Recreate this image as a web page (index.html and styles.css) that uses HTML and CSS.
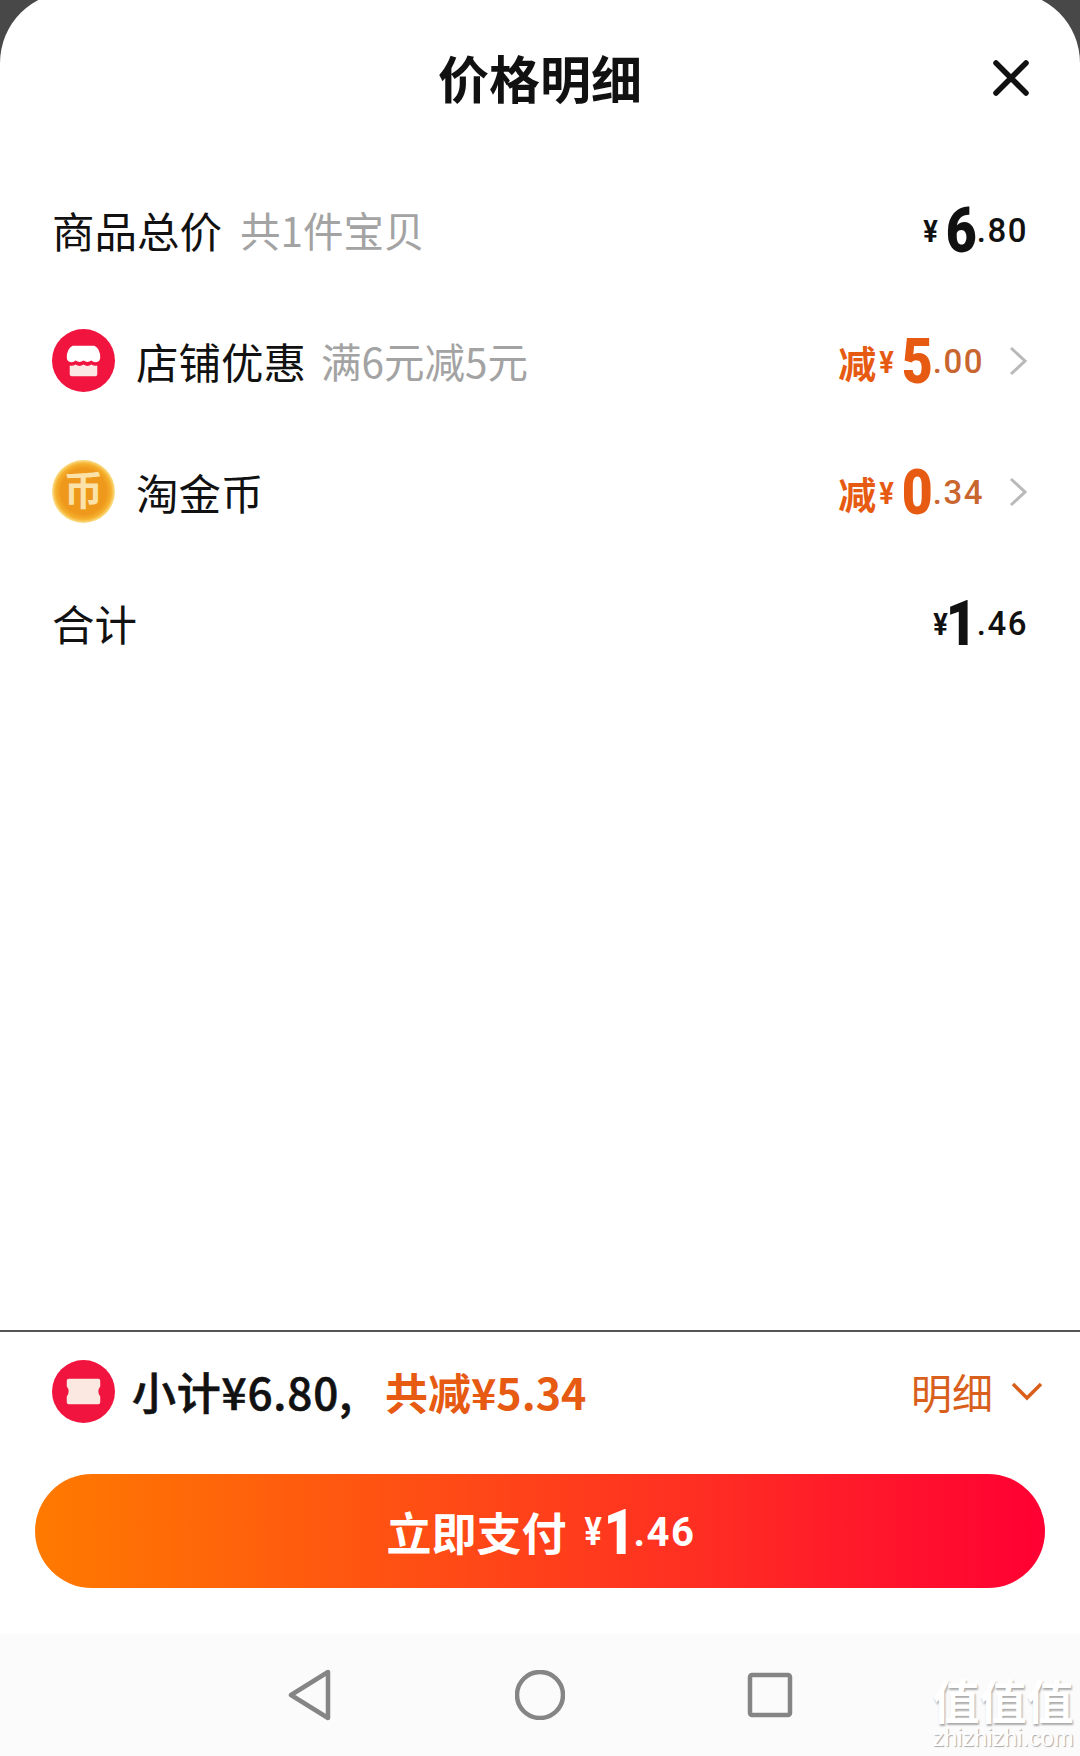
FILE: index.html
```html
<!DOCTYPE html>
<html lang="zh-CN">
  <head>
    <meta charset="UTF-8" />
    <title>价格明细</title>
    <link rel="stylesheet" href="styles.css">
  </head>
  <body>
    <div class="sheet">
      <header class="sheet-head">
        <h1>价格明细</h1>
        <svg class="close" viewBox="0 0 36 36" width="36" height="36">
          <path d="M3 3L33 33M33 3L3 33" fill="none" stroke="#111" stroke-width="5.5" stroke-linecap="round" />
        </svg>
      </header>

      <!-- price rows -->
      <section class="rows">
        <div class="row">
          <span class="label label-wide">商品总价</span>
          <span class="hint">共1件宝贝</span>
          <span class="price"><i>¥</i><b>6</b><em>.80</em></span>
        </div>
        <div class="row">
          <svg class="icon" viewBox="0 0 64 64" width="63" height="63">
            <circle cx="32" cy="32" r="32" fill="#f0143f" />
            <path d="M21 17H43Q49 20 49 29Q49 32 47 33Q43 35 40 32Q36 35 32 32Q28 35 24 32Q21 35 17 33Q15 32 15 29Q15 20 21 17Z" fill="#fff" />
            <path d="M18 37Q21 38 24 36Q28 39 32 36Q36 39 40 36Q43 38 46 37V46Q46 48 44 48H20Q18 48 18 46Z" fill="#fbe8e4" />
          </svg>
          <span class="label">店铺优惠</span>
          <span class="hint">满6元减5元</span>
          <span class="price price-off"><span class="off">减</span><i>¥</i><b>5</b><em>.00</em></span>
          <svg class="arrow" viewBox="0 0 20 32" width="20" height="32">
            <path d="M3 3L17 16L3 29" fill="none" stroke="#b9b9b9" stroke-width="3" />
          </svg>
        </div>
        <div class="row">
          <svg class="icon" viewBox="0 0 64 64" width="63" height="63">
            <defs>
              <radialGradient id="coin" cx="50%" cy="50%" r="50%">
                <stop offset="0.72" stop-color="#ee981c" />
                <stop offset="0.88" stop-color="#f5b02c" />
                <stop offset="1" stop-color="#fbe08c" />
              </radialGradient>
            </defs>
            <circle cx="32" cy="32" r="32" fill="url(#coin)" />
            <text class="coin-text" x="32" y="46" text-anchor="middle">币</text>
          </svg>
          <span class="label">淘金币</span>
          <span class="price price-off"><span class="off">减</span><i>¥</i><b>0</b><em>.34</em></span>
          <svg class="arrow" viewBox="0 0 20 32" width="20" height="32">
            <path d="M3 3L17 16L3 29" fill="none" stroke="#b9b9b9" stroke-width="3" />
          </svg>
        </div>
        <div class="row">
          <span class="label">合计</span>
          <span class="price"><i>¥</i><b class="one">1</b><em>.46</em></span>
        </div>
      </section>

      <footer class="summary">
        <div class="sum-row">
          <svg class="icon" viewBox="0 0 64 64" width="63" height="63">
            <circle cx="32" cy="32" r="32" fill="#f0143f" />
            <path d="M17 19H47Q49 19 49 21V27Q45 32 49 37V43Q49 45 47 45H17Q15 45 15 43V37Q19 32 15 27V21Q15 19 17 19Z" fill="#fbe8e0" />
          </svg>
          <span class="sum-text">小计¥6.80,</span>
          <span class="sum-off">共减¥5.34</span>
          <span class="detail">明细</span>
          <svg class="chevron" viewBox="0 0 32 20" width="32" height="20">
            <path d="M2 3L16 17L30 3" fill="none" stroke="#d9601c" stroke-width="3.5" />
          </svg>
        </div>
        <button class="pay">
          <span class="pay-text">立即支付</span>
          <span class="price pay-price"><i>¥</i><b>1</b><em>.46</em></span>
        </button>
      </footer>

      <nav class="navbar">
        <svg viewBox="0 0 46 52" width="46" height="52">
          <path d="M41 3V49L4 26Z" fill="none" stroke="#858585" stroke-width="4.5" stroke-linejoin="round" />
        </svg>
        <svg viewBox="0 0 50 50" width="50" height="50">
          <circle cx="25" cy="25" r="23" fill="none" stroke="#858585" stroke-width="4.5" />
        </svg>
        <svg viewBox="0 0 46 46" width="46" height="46">
          <rect x="3" y="3" width="40" height="40" rx="2" fill="none" stroke="#858585" stroke-width="4.5" />
        </svg>
      </nav>
    </div>

    <div class="watermark">
      <div class="wm-logo">值值值</div>
      <div class="wm-url">zhizhizhi.com</div>
    </div>
  </body>
</html>
```

FILE: styles.css
```css
body {
  margin: 0;
  width: 1080px;
  height: 1756px;
  overflow: hidden;
  position: relative;
  background-color: #484848;
  font-family: "Noto Sans CJK SC", "Noto Sans", sans-serif;
  color: #111;
}
/* top of the rounded sheet runs just past the screen edge */
.sheet {
  height: 1764px;
  margin-top: -8px;
  display: flex;
  flex-direction: column;
  background-color: #fff;
  border-radius: 71px 71px 0 0;
}
.sheet-head {
  height: 164px;
  padding-top: 6px;
  box-sizing: border-box;
  flex-shrink: 0;
  position: relative;
  display: flex;
  align-items: center;
  justify-content: center;
}
h1 {
  margin: 0;
  font-size: 51px;
  font-weight: 700;
  line-height: 1;
}
.close {
  position: absolute;
  top: 68px;
  right: 51px;
}
.rows {
  flex: 1;
  padding: 8px 52px 0;
}
.row {
  height: 131px;
  display: flex;
  align-items: center;
}
.row .icon {
  margin-right: 21px;
}
.label {
  font-size: 42.5px;
  margin-right: 15px;
}
.label-wide {
  margin-right: 18px;
}
.hint {
  font-size: 40.5px;
  color: #a3a3a3;
}
.price {
  margin-left: auto;
  margin-top: 2px;
  display: flex;
  align-items: center;
  font-family: Roboto, sans-serif;
  font-weight: 700;
}
.price i {
  font-style: normal;
  font-size: 32px;
  margin-right: 6px;
  transform: scaleX(0.85);
}
.price b {
  font-size: 63px;
  line-height: 1;
  margin: 0 -3px 0 -2px;
  transform: scaleX(0.85);
}
.price b.one {
  margin-left: -12px;
}
.price em {
  font-style: normal;
  font-weight: 500;
  font-size: 33px;
  letter-spacing: 1.5px;
}
.price-off {
  color: #e65a12;
}
.price-off em {
  color: #c9662f;
}
.off {
  font-family: "Noto Sans CJK SC", sans-serif;
  font-size: 38px;
  margin-right: 2px;
}
.arrow {
  margin-left: 24px;
}
.coin-text {
  font-size: 40px;
  font-weight: 700;
  fill: #fbe2a8;
}
.summary {
  border-top: 2px solid #555;
  flex-shrink: 0;
  height: 304px;
  box-sizing: border-box;
  padding: 0 35px;
}
.sum-row {
  height: 118px;
  margin-bottom: 24px;
  display: flex;
  align-items: center;
  padding: 0 2px 0 17px;
}
.sum-row .icon {
  margin-right: 17px;
}
.sum-text {
  font-size: 44px;
  font-weight: 500;
  letter-spacing: 0.8px;
  margin-right: 32px;
  -webkit-text-stroke: 0.6px #111;
}
.sum-off {
  font-size: 43px;
  font-weight: 700;
  color: #e65a12;
}
.detail {
  margin-left: auto;
  font-size: 41px;
  color: #d9601c;
}
.chevron {
  margin-left: 18px;
}
.pay {
  width: 1010px;
  height: 114px;
  display: flex;
  align-items: center;
  justify-content: center;
  gap: 16px;
  padding: 0 0 0 2px;
  border: none;
  border-radius: 57px;
  color: #fff;
  font-family: inherit;
  background: linear-gradient(90deg, #ff7a00 0%, #ff2f22 65%, #ff0033 100%);
}
.pay-text {
  font-size: 45px;
  font-weight: 700;
}
.pay-price {
  margin-left: 0;
}
.pay-price i {
  font-size: 38px;
  margin-right: 0;
}
.pay-price b {
  margin-right: -4px;
}
.pay-price em {
  font-size: 40px;
  font-weight: 700;
}
.navbar {
  height: 122px;
  flex-shrink: 0;
  display: flex;
  align-items: center;
  justify-content: center;
  gap: 182px;
  background-color: #fbfbfb;
}
.watermark {
  position: absolute;
  left: 928px;
  top: 1673px;
  width: 150px;
  text-align: center;
  color: #fff;
}
.wm-logo {
  font-size: 47px;
  font-weight: 700;
  line-height: 52px;
  text-shadow: 1px 2px 2px #aaa;
}
.wm-url {
  font-family: "Liberation Sans", sans-serif;
  font-size: 23.5px;
  line-height: 26px;
  text-shadow: 1px 1px 1px #aaa;
}
```
